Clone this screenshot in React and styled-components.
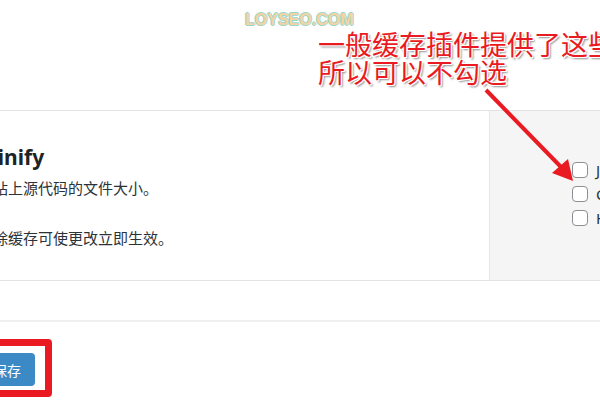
import styled, { createGlobalStyle } from "styled-components";

const GlobalStyle = createGlobalStyle`
  body {
    margin: 0;
    background: #fff;
    overflow: hidden;
  }
`;

const Page = styled.div`
  position: relative;
  width: 600px;
  height: 400px;
  overflow: hidden;
  background: #fff;
  font-family: "Noto Sans", "Noto Sans CJK SC", sans-serif;
  color: #23282d;
`;

const Header = styled.div`
  height: 110px;
  box-sizing: border-box;
  padding: 10px 0 0 245px;
`;

const Watermark = styled.div`
  font-family: "Liberation Sans", Arial, sans-serif;
  font-weight: 700;
  font-size: 16px;
  line-height: 20px;
  color: #f4d4a2;
  text-shadow: 1px 0 0 #9ad6cc, -1px 0 0 #9ad6cc, 0 1px 0 #9ad6cc, 0 -1px 0 #9ad6cc;
`;

// 截图上的红色标注文字
const Note = styled.div`
  position: absolute;
  left: 318px;
  top: 30px;
  white-space: nowrap;
  font-family: "Noto Sans CJK SC", sans-serif;
  font-size: 27px;
  line-height: 28px;
  color: #ea1a22;
  text-shadow: 1px 1px 0 #fff, -1px -1px 0 #fff, 1px -1px 0 #fff, -1px 1px 0 #fff,
    2px 2px 2px rgba(0, 0, 0, 0.45);
`;

const Arrow = styled.svg`
  position: absolute;
  left: 0;
  top: 0;
  pointer-events: none;
`;

const SettingRow = styled.div`
  display: grid;
  grid-template-columns: 489px 1fr;
  height: 171px;
  box-sizing: border-box;
  border-top: 1px solid #e3e3e3;
  border-bottom: 1px solid #e3e3e3;
`;

const Info = styled.div`
  margin-left: -22px;
  padding-top: 32px;
`;

const Title = styled.h2`
  margin: 0 0 5px;
  font-size: 21px;
  line-height: 28px;
  font-weight: 700;
  color: #1d2327;
`;

const Text = styled.p`
  margin: 0 0 26px;
  font-size: 15px;
  line-height: 24px;
  color: #2c3338;
`;

const OptionsPanel = styled.div`
  background: #f5f5f5;
  border-left: 1px solid #e6e6e6;
  padding: 51px 0 0 82px;
  display: flex;
  flex-direction: column;
  gap: 8px;
`;

const Option = styled.label`
  display: flex;
  align-items: center;
  gap: 8px;
  height: 16px;
  white-space: nowrap;
  font-size: 15px;
  color: #2c3338;
`;

const Box = styled.span`
  width: 16px;
  height: 16px;
  box-sizing: border-box;
  border: 1px solid #8c8f94;
  border-radius: 4px;
  background: #fff;
  flex: none;
`;

const Divider = styled.div`
  margin-top: 39px;
  height: 2px;
  background: #efefef;
`;

const Footer = styled.div`
  padding-top: 17px;
  margin-left: -47px;
`;

const Highlight = styled.div`
  display: inline-flex;
  border: 7px solid #ea1a22;
  border-radius: 4px;
  padding: 7px 10px 4px 19px;
`;

const SaveButton = styled.button`
  height: 33px;
  padding: 0 14px;
  border: none;
  border-radius: 4px;
  background: #3b8ac5;
  color: #fff;
  font-family: "Noto Sans CJK SC", sans-serif;
  font-size: 14px;
`;

const options = ["JS", "CSS", "HTML"];

const App = () => {
  return (
    <Page>
      <GlobalStyle />
      <Header>
        <Watermark>LOYSEO.COM</Watermark>
      </Header>
      <SettingRow>
        <Info>
          <Title>Minify</Title>
          <Text>网站上源代码的文件大小。</Text>
          <Text>清除缓存可使更改立即生效。</Text>
        </Info>
        <OptionsPanel>
          {options.map((o) => (
            <Option key={o}>
              <Box />
              {o}
            </Option>
          ))}
        </OptionsPanel>
      </SettingRow>
      <Divider />
      <Footer>
        <Highlight>
          <SaveButton>保存</SaveButton>
        </Highlight>
      </Footer>
      <Note>
        一般缓存插件提供了这些功能
        <br />
        所以可以不勾选
      </Note>
      <Arrow width="600" height="400" viewBox="0 0 600 400">
        <line x1="486" y1="90" x2="562" y2="168" stroke="#ea1a22" strokeWidth="4" />
        <polygon points="552,173 573,181 568,159" fill="#ea1a22" />
      </Arrow>
    </Page>
  );
};

export default App;
